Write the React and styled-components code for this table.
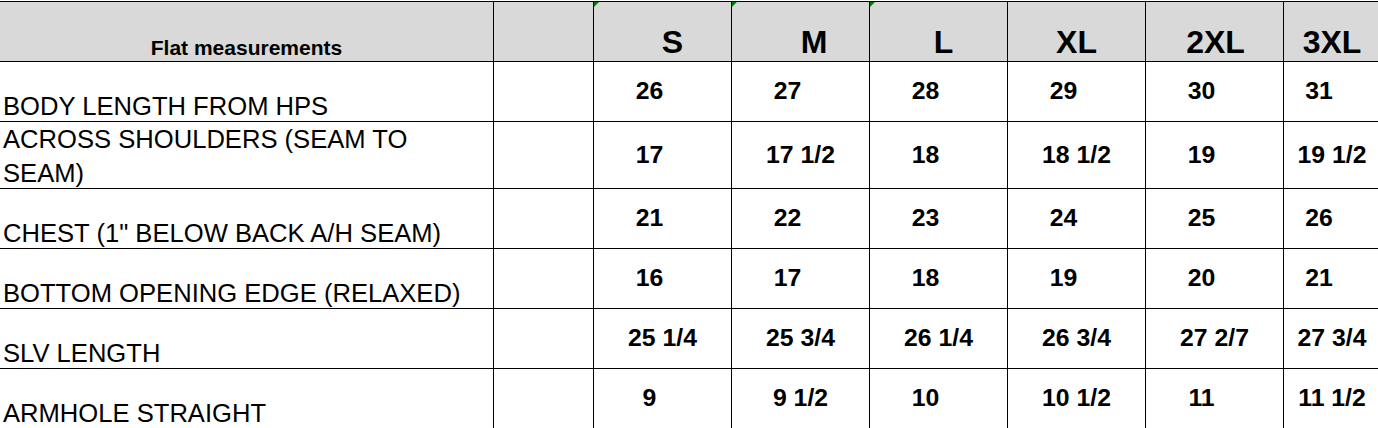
import React from "react";
import styled, { createGlobalStyle } from "styled-components";

const GlobalStyle = createGlobalStyle`
  body {
    margin: 0;
    background: #fff;
    overflow: hidden;
  }
`;

const sizes = [
  { label: "S", shift: 20, flag: true },
  { label: "M", shift: 27, flag: true },
  { label: "L", shift: 10, flag: true },
  { label: "XL", shift: 0 },
  { label: "2XL", shift: 2 },
  { label: "3XL", shift: 0 },
];

const rows = [
  { name: ["BODY LENGTH FROM HPS"], values: ["26", "27", "28", "29", "30", "31"] },
  {
    name: ["ACROSS SHOULDERS (SEAM TO", "SEAM)"],
    values: ["17", "17 1/2", "18", "18 1/2", "19", "19 1/2"],
  },
  { name: ['CHEST (1" BELOW BACK A/H SEAM)'], values: ["21", "22", "23", "24", "25", "26"] },
  { name: ["BOTTOM OPENING EDGE (RELAXED)"], values: ["16", "17", "18", "19", "20", "21"] },
  {
    name: ["SLV LENGTH"],
    values: ["25 1/4", "25 3/4", "26 1/4", "26 3/4", "27 2/7", "27 3/4"],
  },
  {
    name: ["ARMHOLE STRAIGHT"],
    values: ["9", "9 1/2", "10", "10 1/2", "11", "11 1/2"],
  },
];

function App() {
  return (
    <>
      <GlobalStyle />
      <Sheet>
        <HeadCell>
          <HeadTitle>Flat measurements</HeadTitle>
        </HeadCell>
        <HeadCell />
        {sizes.map((s) => (
          <HeadCell key={s.label} $flag={s.flag}>
            <SizeLabel $shift={s.shift}>{s.label}</SizeLabel>
          </HeadCell>
        ))}

        {rows.map((row) => (
          <React.Fragment key={row.name[0]}>
            <LabelCell>
              <LabelText>
                {row.name.map((line, i) => (
                  <React.Fragment key={line}>
                    {i > 0 && <br />}
                    {line}
                  </React.Fragment>
                ))}
              </LabelText>
            </LabelCell>
            <Cell />
            {row.values.map((v, i) => (
              <ValueCell key={i} $whole={!v.includes("/")}>
                {v}
              </ValueCell>
            ))}
          </React.Fragment>
        ))}
      </Sheet>
    </>
  );
}

const Sheet = styled.div`
  display: grid;
  grid-template-columns: 494px 100px repeat(5, 138px) 97px;
  grid-template-rows: 60px 60px 67px repeat(4, 60px);
  width: max-content;
  margin-top: 1px;
  border-top: 1px solid #000;
  font-family: "Liberation Sans", Arial, sans-serif;
  color: #000;
`;

const Cell = styled.div`
  box-sizing: border-box;
  border-right: 1px solid #000;
  border-bottom: 1px solid #000;
  min-width: 0;
`;

const HeadCell = styled(Cell)`
  position: relative;
  display: flex;
  align-items: flex-end;
  justify-content: center;
  background: #d9d9d9;
  font-weight: bold;

  &::before {
    content: "";
    display: ${(p) => (p.$flag ? "block" : "none")};
    position: absolute;
    top: 0;
    left: 0;
    border-top: 5px solid #008000;
    border-right: 5px solid transparent;
  }
`;

const HeadTitle = styled.span`
  font-size: 21px;
  line-height: 1;
  padding-bottom: 3px;
`;

const SizeLabel = styled.span`
  font-size: 32px;
  line-height: 1;
  padding-bottom: 3px;
  padding-left: ${(p) => p.$shift}px;
`;

const LabelCell = styled(Cell)`
  display: flex;
  align-items: flex-end;
  padding-left: 3px;
`;

const LabelText = styled.div`
  font-size: 25.6px;
  line-height: 34px;
  margin-bottom: -2px;
  white-space: nowrap;
`;

const ValueCell = styled(Cell)`
  display: flex;
  align-items: center;
  justify-content: center;
  font-size: 24.8px;
  font-weight: bold;
  line-height: 1;
  white-space: nowrap;
  padding-right: ${(p) => (p.$whole ? "26px" : "0")};
`;

export default App;
